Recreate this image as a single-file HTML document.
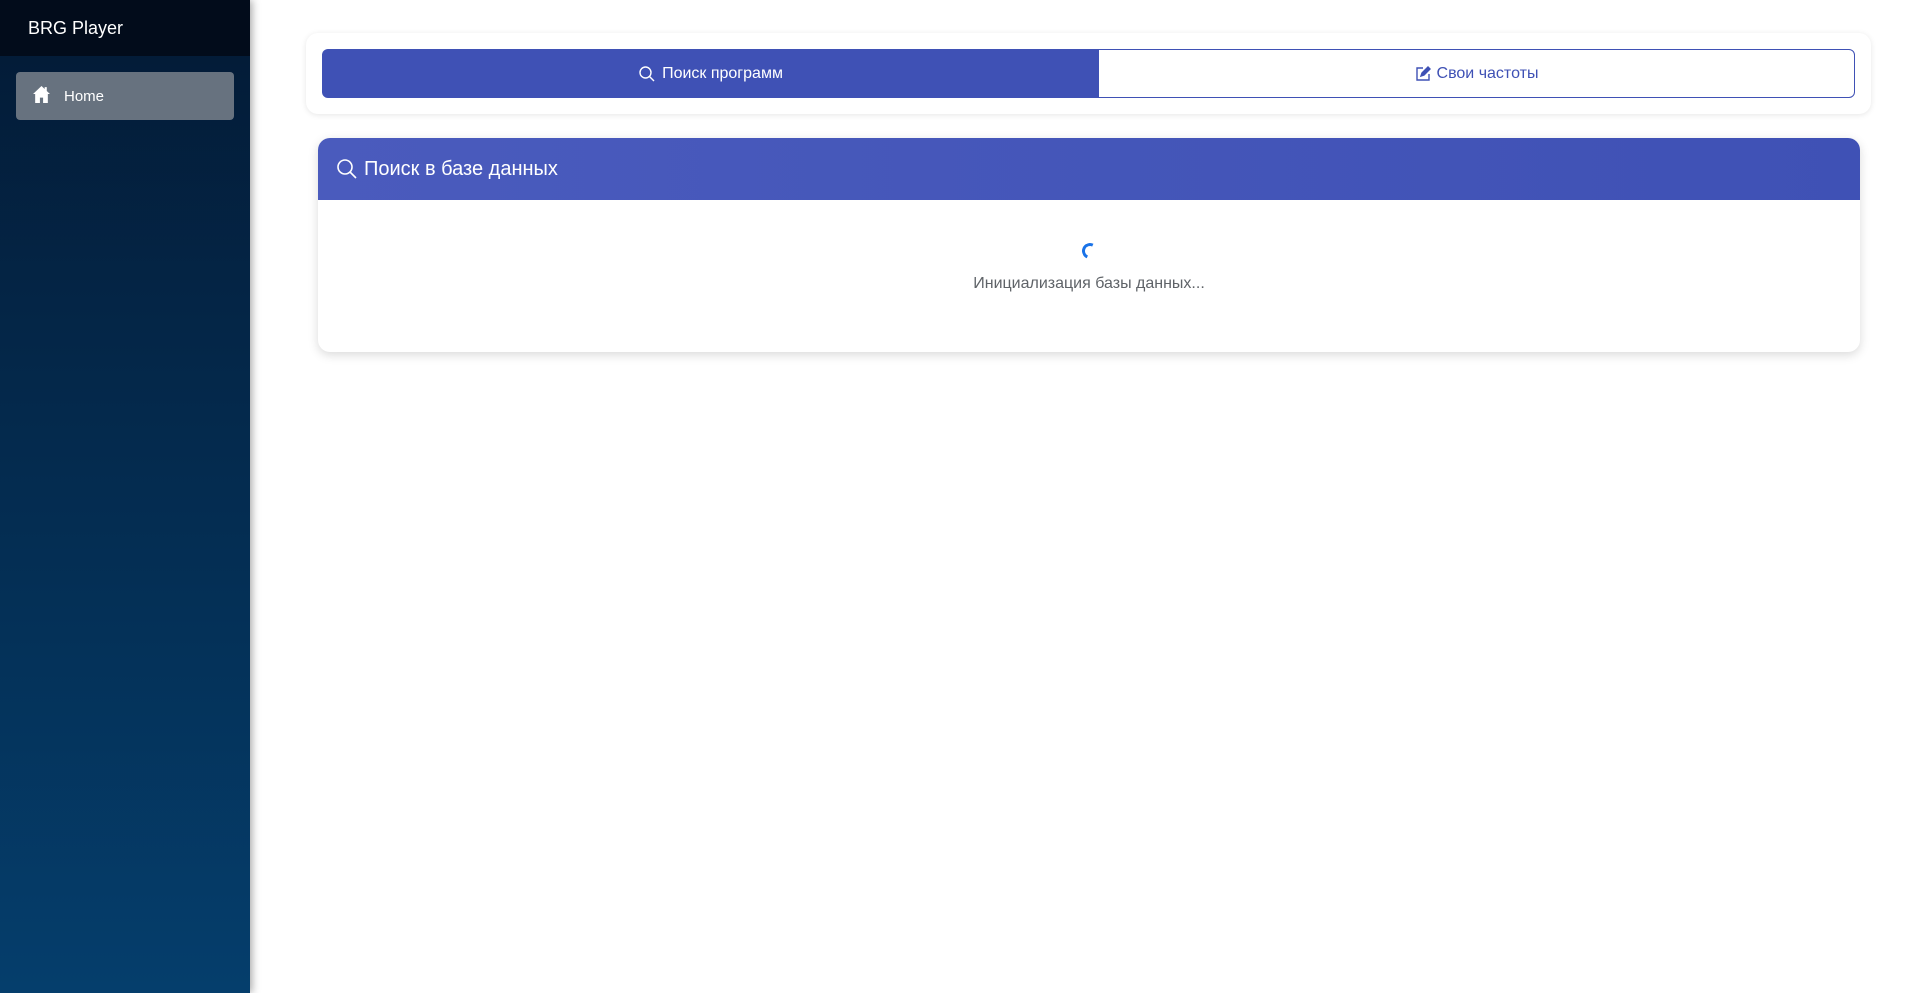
<!DOCTYPE html>
<html><head><meta charset="utf-8"><style>
*{box-sizing:border-box;margin:0;padding:0}
body{width:1920px;height:993px;overflow:hidden;background:#fff;font-family:"Liberation Sans",sans-serif;position:relative}
.sb{position:absolute;left:0;top:0;width:250px;height:993px;background:linear-gradient(#031a35,#053e6c);box-shadow:2px 0 8px rgba(0,0,0,.35)}
.sbh{height:56px;background:#020c1b;color:#fff;font-size:18px;padding:18px 0 0 28px}
.home{position:absolute;left:16px;top:72px;width:218px;height:48px;background:#67727f;border-radius:4px;color:#fff;font-size:15px}
.home span{position:absolute;left:48px;top:16px}
.card1{position:absolute;left:306px;top:33px;width:1565px;height:81px;background:#fff;border-radius:12px;box-shadow:0 1px 6px rgba(0,0,0,.1)}
.b1{position:absolute;left:16px;top:16px;width:777px;height:49px;background:#3f51b5;border-radius:6px 0 0 6px;color:#fff;font-size:16px;display:flex;align-items:center;justify-content:center;gap:6px}
.b2{position:absolute;left:792px;top:16px;width:757px;height:49px;border:1px solid #3f51b5;border-radius:0 6px 6px 0;color:#3f51b5;font-size:16px;display:flex;align-items:center;justify-content:center;gap:6px}
.card2{position:absolute;left:318px;top:138px;width:1542px;height:214px;background:#fff;border-radius:12px;box-shadow:0 3px 10px rgba(0,0,0,.15);overflow:hidden}
.hd{height:62px;background:linear-gradient(90deg,#4a5bbd,#3f51b5);color:#fff;font-size:20px;display:flex;align-items:center;padding-left:18px;gap:6px}
.sp{position:absolute;left:1082px;top:243px;width:16px;height:16px;border:3px solid #1a73e8;border-right-color:transparent;border-bottom-color:transparent;border-radius:50%;transform:rotate(-20deg)}
.lt{position:absolute;top:275px;text-align:center;color:#5f6368;font-size:16px}
</style></head><body>
<div class="sb"><div class="sbh">BRG Player</div>
<div class="home"><svg style="position:absolute;left:16px;top:13px" width="19" height="19" viewBox="0 0 18 18"><path d="M9 1L1 8.5h2V17h4.5v-5h3v5H15V8.5h2L14 5.7V2h-2v1.8z" fill="#fff"/></svg><span>Home</span></div></div>
<div class="card1">
<div class="b1"><svg width="18" height="18" viewBox="0 0 18 18" fill="none" stroke="#fff" stroke-width="1.4"><circle cx="7.5" cy="7.5" r="5.5"/><path d="M11.5 11.5l4.5 4.5"/></svg>Поиск программ</div>
<div class="b2"><svg width="16" height="16" viewBox="0 0 16 16" fill="none" stroke="#3f51b5" stroke-width="1.4"><path d="M8 2H2v12h12V8"/><path d="M6 10l1-3 6-6 2 2-6 6z" fill="#3f51b5"/></svg>Свои частоты</div>
</div>
<div class="card2"><div class="hd"><svg width="22" height="22" viewBox="0 0 22 22" fill="none" stroke="#fff" stroke-width="1.6"><circle cx="9" cy="9" r="7"/><path d="M14 14l6 6"/></svg>Поиск в базе данных</div></div>
<div class="sp"></div>
<div class="lt" style="left:318px;width:1542px">Инициализация базы данных...</div>
</body></html>
